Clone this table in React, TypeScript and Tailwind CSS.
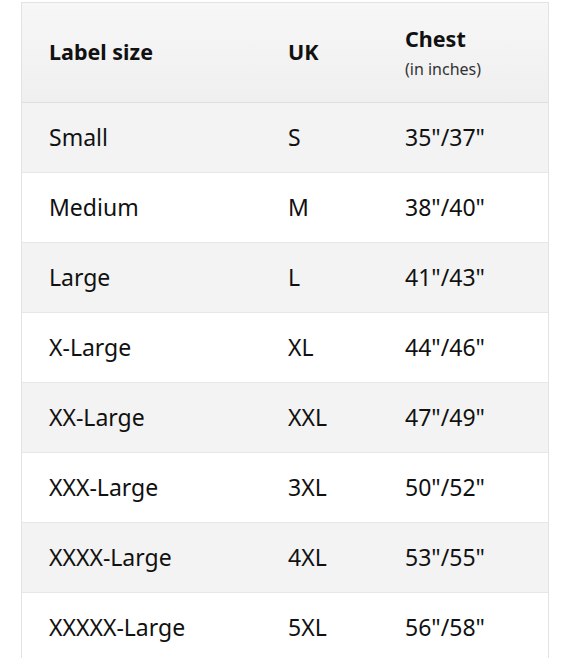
import React from 'react';

const rows = [
  { label: 'Small', uk: 'S', chest: '35"/37"' },
  { label: 'Medium', uk: 'M', chest: '38"/40"' },
  { label: 'Large', uk: 'L', chest: '41"/43"' },
  { label: 'X-Large', uk: 'XL', chest: '44"/46"' },
  { label: 'XX-Large', uk: 'XXL', chest: '47"/49"' },
  { label: 'XXX-Large', uk: '3XL', chest: '50"/52"' },
  { label: 'XXXX-Large', uk: '4XL', chest: '53"/55"' },
  { label: 'XXXXX-Large', uk: '5XL', chest: '56"/58"' },
];

export default function App() {
  return (
    <div
      className="w-[570px] h-[658px] overflow-hidden bg-white pt-[2px] pl-[21px] text-[#111]"
      style={{ fontFamily: '"Noto Sans", "Open Sans", Arial, sans-serif' }}
    >
      <div className="w-[528px] border border-[#e3e3e3] border-b-0">
        <div className="flex h-[100px] items-center bg-gradient-to-b from-[#f7f7f7] to-[#efefef] border-b border-[#dedede]">
          <div className="w-[266px] pl-[27px] text-[21.5px] font-bold">Label size</div>
          <div className="w-[117px] text-[21.5px] font-bold">UK</div>
          <div className="flex flex-col">
            <span className="text-[21.5px] font-bold leading-[28px]">Chest</span>
            <span className="text-[16px] leading-[24px] mt-[4px] text-[#333]">(in inches)</span>
          </div>
        </div>
        {rows.map((r, i) => (
          <div
            key={r.label}
            className={`flex h-[70px] items-center border-b border-[#e7e7e7] text-[23px] ${
              i % 2 === 0 ? 'bg-[#f3f3f3]' : 'bg-white'
            }`}
          >
            <div className="w-[266px] pl-[27px]">{r.label}</div>
            <div className="w-[117px]">{r.uk}</div>
            <div>{r.chest}</div>
          </div>
        ))}
      </div>
    </div>
  );
}
